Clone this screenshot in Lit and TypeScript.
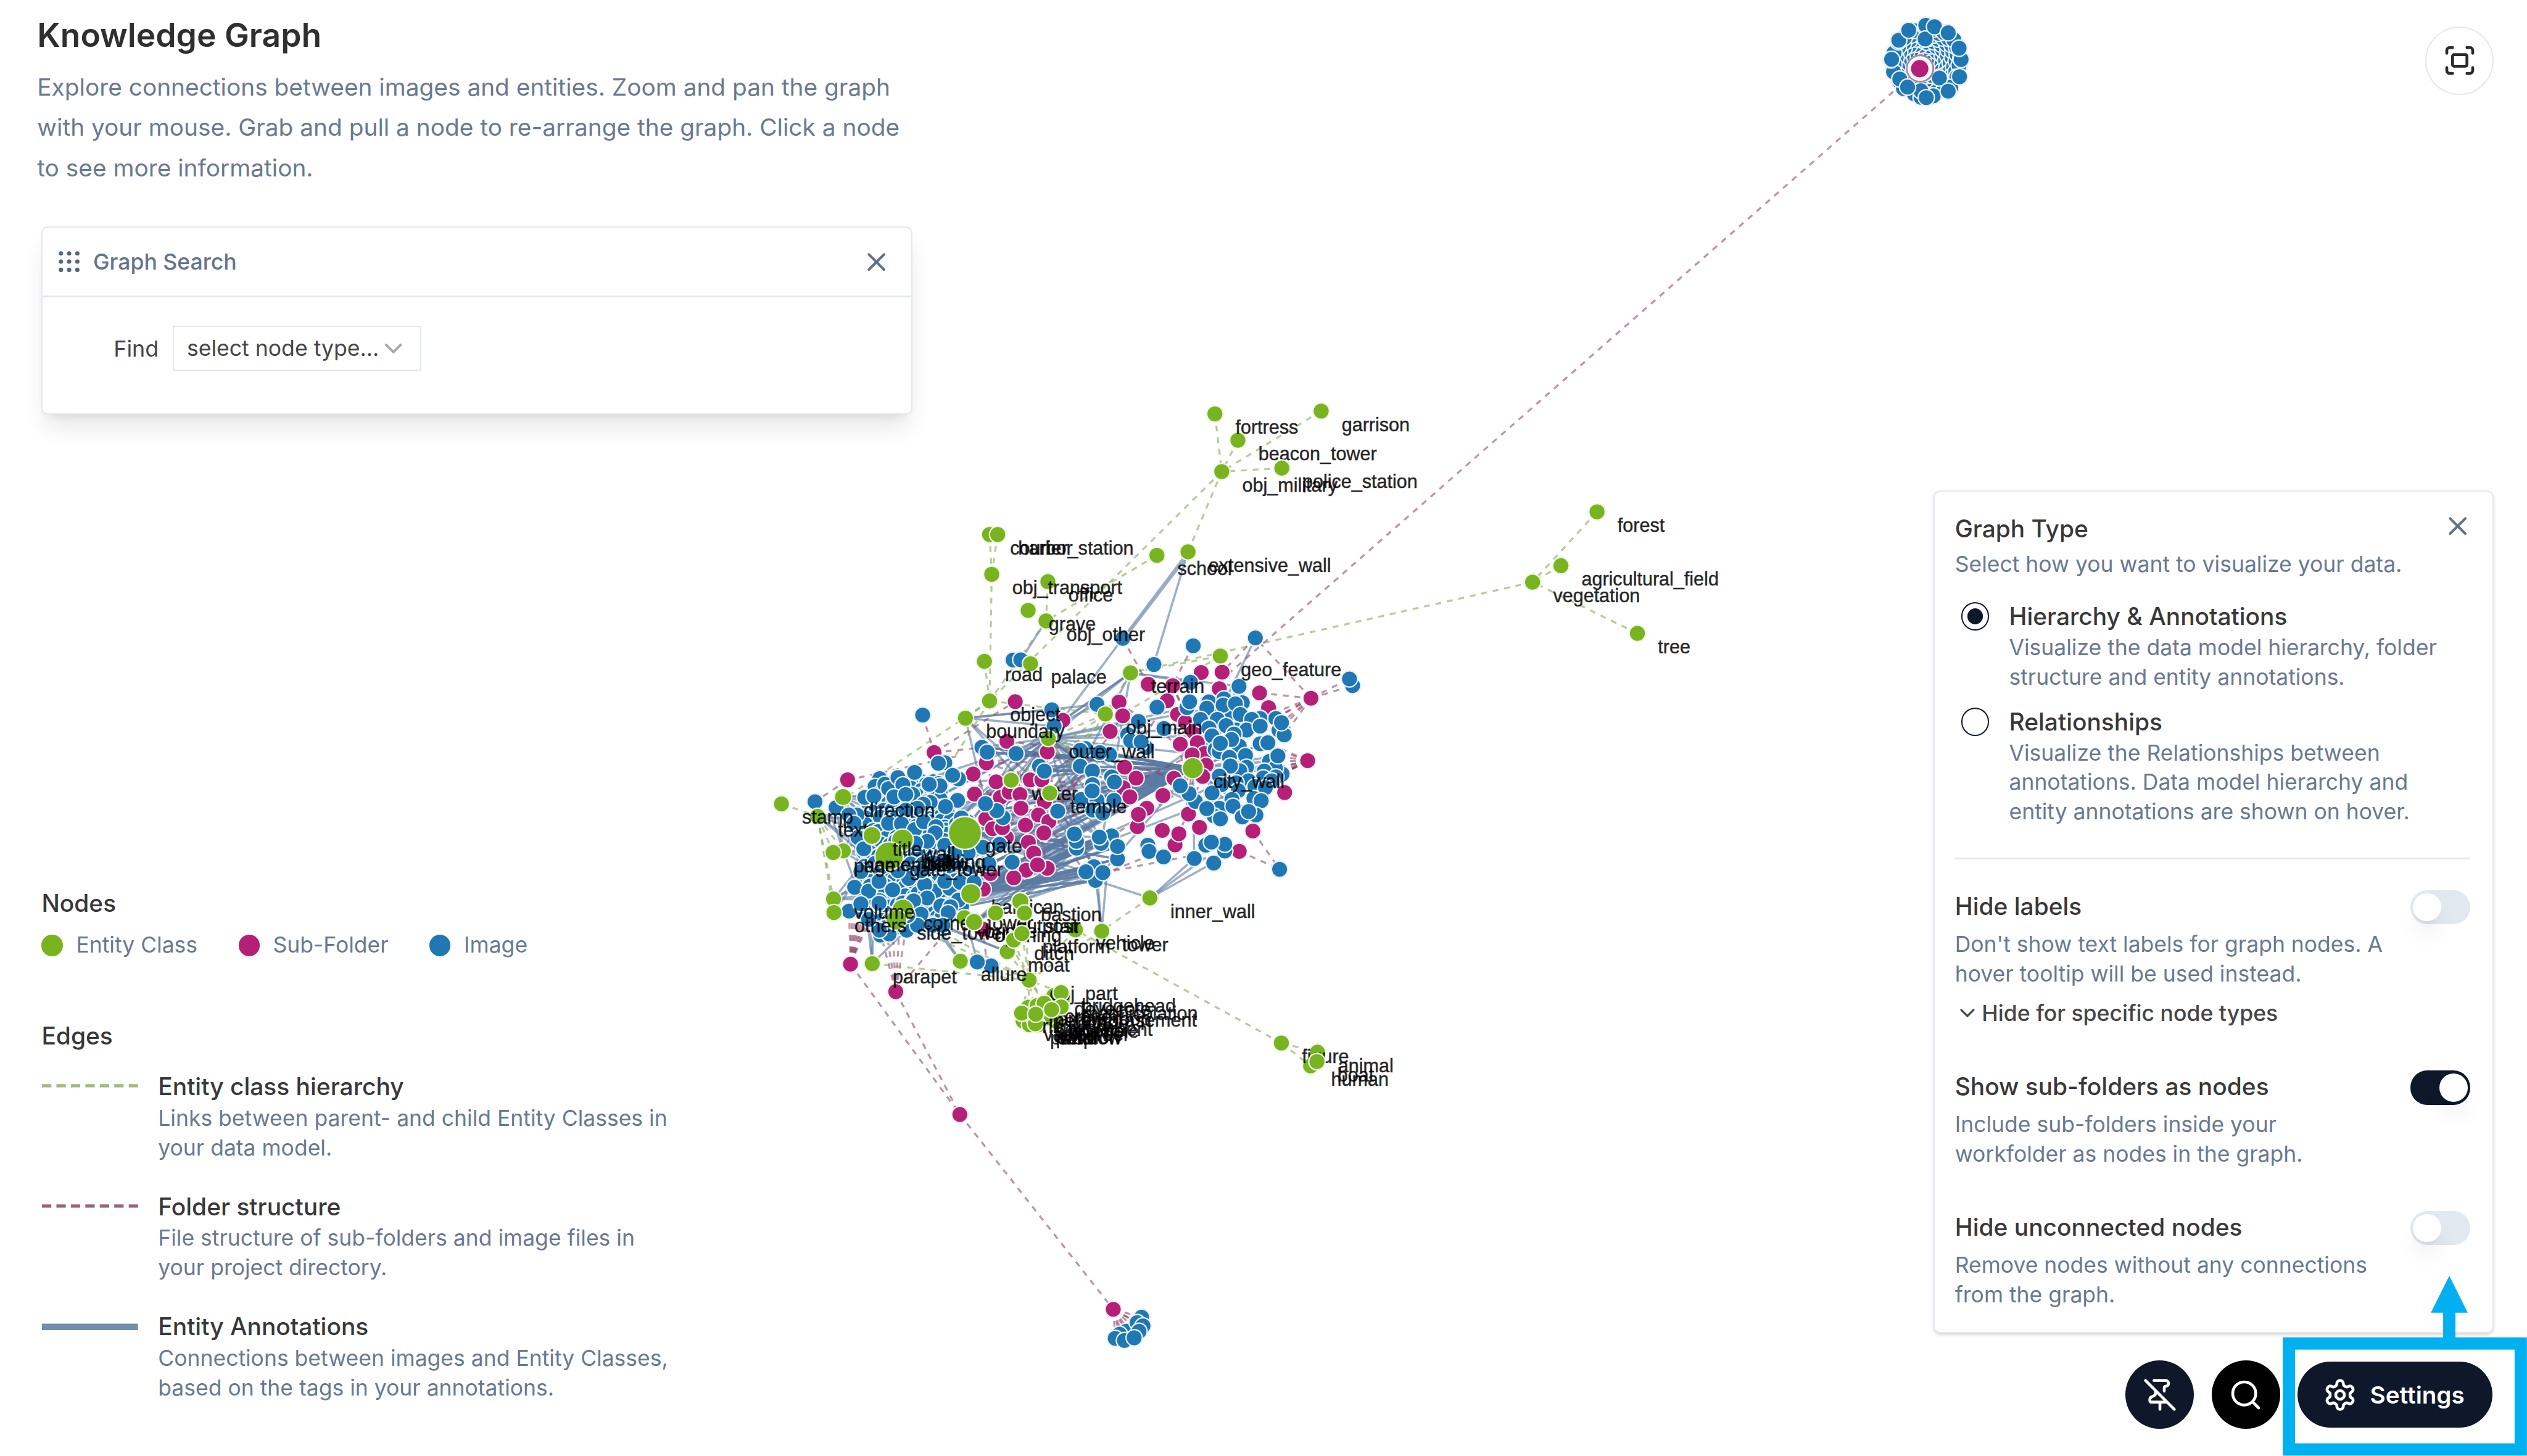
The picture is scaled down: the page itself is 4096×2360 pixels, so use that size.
import { LitElement, html, svg, css } from 'lit';
import { customElement } from 'lit/decorators.js';

type P = [number, number];
type Entity = { x: number; y: number; r: number; label: string };

/* Maps a flat list of local coordinates into graph space. */
const place = (ox: number, oy: number, sx: number, sy: number, flat: number[]): P[] => {
  const out: P[] = [];
  for (let i = 0; i < flat.length; i += 2) out.push([ox + flat[i] / sx, oy + flat[i + 1] / sy]);
  return out;
};

/* Small seeded generator, so that the layout is stable between renders. */
let seed = 7;
const rnd = () => {
  seed = (seed * 1664525 + 1013904223) % 4294967296;
  return seed / 4294967296;
};

/* ---------- images ---------- */
const imagesWestBack: P[] = [];
for (let y = 1335; y < 1595; y += 13) {
  for (let x = 1465; x < 1660; x += 13) {
    const px = x + (rnd() - 0.5) * 12;
    const py = y + (rnd() - 0.5) * 12;
    const left = py < 1400 ? 1465 + (1400 - py) * 0.35 : py > 1550 ? 1462 + (py - 1550) * 0.9 : 1470;
    const right = py < 1400 ? 1618 : py > 1550 ? 1640 - (py - 1550) * 0.8 : 1664;
    if (px > left && px < right) imagesWestBack.push([px, py]);
  }
}
const imagesWest = place(1380, 1240, 3, 3, [
  35, 387, 143, 417, 250, 455, 208, 455, 235, 498, 290, 365, 337, 358, 393, 297, 412, 320, 460, 263, 485, 300,
  545, 237, 440, 362, 535, 350, 500, 350, 675, 305, 620, 298, 700, 187, 667, 190, 770, 270, 740, 252, 765, 380,
  703, 412, 625, 390, 590, 400, 560, 420, 500, 430, 412, 497, 478, 500, 545, 530, 592, 490, 655, 515, 650, 547,
  785, 470, 610, 590, 550, 600, 700, 610, 255, 570, 285, 628, 270, 745, 238, 825, 310, 845, 363, 795, 515, 780,
  433, 838, 650, 845, 597, 812, 725, 830, 700, 795, 780, 800, 850, 800, 210, 947, 270, 910, 363, 907, 610, 880,
  540, 895, 578, 963, 770, 890, 680, 920, 730, 925, 717, 955, 370, 1070, 415, 1065, 365, 1045, 505, 1045,
  560, 1020, 640, 1020, 690, 1020, 310, 990, 510, 970, 895, 620, 925, 705, 980, 605, 820, 650, 760, 700,
  1045, 697, 890, 108, 917, 133, 1065, 140, 1185, 205, 1210, 230, 998, 468, 966, 433, 908, 397, 1275, 437,
  937, 1228, 866, 1208, 750, 650, 700, 690, 640, 700, 580, 740, 460, 740,
]);
const imagesEast = place(1800, 1050, 2.8, 3, [
  328, 120, 665, 158, 962, 118, 477, 254, 652, 345, 884, 366, 1427, 362, 1412, 328, 205, 458, 492, 473, 403, 545,
  525, 582, 352, 613, 366, 645, 440, 680, 416, 650, 150, 685, 125, 693, 265, 715, 218, 705, 125, 775, 183, 800,
  275, 830, 288, 856, 183, 870, 130, 945, 205, 950, 182, 902, 286, 950, 185, 1000, 232, 1015, 17, 1005, 107, 1195,
  107, 1160, 97, 1122, 275, 1132, 225, 1170, 216, 1138, 303, 1250, 303, 1186, 190, 1290, 198, 1360, 152, 1316,
  233, 1320, 448, 1180, 454, 1211, 523, 1240, 725, 1180, 816, 1210, 816, 1175, 752, 1164, 670, 1248, 763, 1271,
  1078, 1303,
  635, 475, 648, 445, 740, 445, 812, 430, 900, 450, 770, 500, 850, 500, 730, 478, 808, 462, 867, 455, 700, 535, 890, 510,
  780, 535, 985, 530, 945, 535, 870, 590, 920, 590, 740, 580, 822, 567, 985, 570, 1060, 530, 1075, 590, 1100, 615, 1087, 552,
  755, 620, 860, 610, 885, 672, 848, 638, 770, 690, 790, 700, 795, 658, 985, 660, 1022, 655, 915, 720, 840, 770, 838, 730,
  1030, 750, 1090, 815, 1058, 785, 1070, 722, 920, 780, 888, 798, 843, 774, 1005, 800, 1000, 835, 790, 825, 1060, 830,
  930, 850, 960, 880, 1040, 850, 870, 860, 800, 870, 880, 900, 1010, 885, 955, 940, 990, 952,
  850, 945, 790, 990, 765, 1030, 795, 1045, 855, 980, 675, 955, 755, 912, 730, 992, 645, 915, 603, 875, 900, 1035,
  965, 1025, 930, 1007,
]);
const imagesMisc: P[] = [[1575.5, 1221], [1800, 1240], [1796, 1212], [1730, 1127], [1743, 1126.7]];
const imagesNorthBack: P[] = Array.from({ length: 130 }, (_, i) => {
  const a = i * 2.39996;
  const r = 61 * Math.sqrt((i + 6) / 136);
  return [3289.3 + Math.cos(a) * r, 106 + Math.sin(a) * r] as P;
});
const imagesNorth = place(3190, 0, 3, 3, [
  365, 400, 295, 130, 292, 200, 340, 137, 157, 206, 208, 155, 410, 168, 476, 305, 466, 247, 468, 393, 410, 467,
  270, 465, 298, 500, 162, 405, 202, 446, 120, 304,
]);
const imagesSouth = place(1860, 2190, 3, 3, [
  190, 250, 155, 265, 268, 178, 245, 205, 275, 222, 255, 250, 133, 286, 180, 297, 230, 283,
]);

/* ---------- sub-folders ---------- */
const folders: P[] = [
  ...place(1800, 1050, 2.8, 3, [
    450, 355, 567, 362, 703, 295, 803, 293, 790, 378, 310, 447, 540, 440, 328, 517, 268, 597, 590, 510, 628, 550,
    665, 597, 685, 655, 603, 662, 720, 710, 660, 717, 727, 770, 710, 827, 573, 837, 337, 780, 392, 836, 330, 885,
    362, 932, 520, 925, 443, 990, 398, 1085, 403, 1022, 642, 1020, 695, 1088, 517, 1104, 578, 1178, 596, 1121,
    982, 400, 1228, 427, 1025, 475, 1212, 747, 1102, 910, 950, 1107, 885, 1211, 42, 540,
  ]),
  ...place(1380, 1240, 3, 3, [
    645, 135, 202, 275, 1018, 78, 1225, 132, 913, 188, 845, 245, 852, 348, 963, 285, 1137, 275, 1197, 275,
    970, 400, 985, 365, 1030, 338, 1085, 350, 1090, 420, 1210, 388, 1180, 455, 1233, 488, 1113, 507, 1207, 547,
    910, 475, 945, 525, 1015, 570, 995, 520, 1128, 595, 1155, 650, 1225, 728, 1117, 738, 1175, 710, 1053, 777,
    933, 755, 897, 835, 895, 1040, 217, 1219,
  ]),
  [1733.6, 1198], [1529.6, 1693.3], [1639, 1903], [1901, 2235.7],
];

/* ---------- entity classes ---------- */
const E = (label: string, x: number, y: number, r = 13.2): Entity => ({ label, x, y, r });
const entities: Entity[] = [
  E('fortress', 2074.5, 706.7), E('garrison', 2256, 702), E('beacon_tower', 2113.8, 751.7),
  E('obj_military', 2086.2, 805.3), E('police_station', 2188.8, 799.3),
  E('courier_station', 1689.8, 912.7), E('harbor', 1703.6, 912.7),
  E('office', 1789.3, 993.3), E('obj_transport', 1693.4, 980.7), E('school', 1975.5, 948.3),
  E('extensive_wall', 2028.6, 942.3), E('grave', 1755.6, 1042.3), E('obj_other', 1786.2, 1060.3),
  E('road', 1681, 1129.3), E('palace', 1759.7, 1133.3), E('geo_feature', 2083.7, 1120.3),
  E('terrain', 1930.4, 1149), E('obj_main', 1887.5, 1219.3), E('city_wall', 2036.8, 1311.7, 17.3),
  E('outer_wall', 1790, 1261), E('object', 1689.8, 1197), E('boundary', 1648.6, 1226.3),
  E('inner_wall', 1963.5, 1533.3),
  E('forest', 2727, 874), E('agricultural_field', 2665.5, 966), E('vegetation', 2617, 994), E('tree', 2796, 1081.5),
  E('text', 1396, 1394), E('stamp', 1334.4, 1372.7), E('direction', 1439.7, 1361, 14),
  E('water', 1726.7, 1332.3), E('temple', 1792.5, 1354.3),
  E('wall', 1541, 1434.3, 18), E('gate_tower', 1518.3, 1461.7, 23.5), E('title', 1489, 1426.7, 14.6),
  E('name', 1440, 1453), E('page', 1422.7, 1455.7), E('gate', 1647.7, 1422.3, 27.5),
  E('volume', 1423.3, 1535), E('others', 1424, 1558.3), E('corner_tower', 1541.7, 1554, 18),
  E('side_tower', 1530.7, 1570.7, 17), E('barbican', 1657.7, 1526, 16.6),
  E('bridge', 1646.7, 1567), E('opening', 1663.3, 1574.3, 14), E('outpost', 1700, 1559),
  E('bastion', 1742.3, 1539, 14), E('stair', 1749.3, 1559),
  E('moat', 1720, 1625), E('ditch', 1731, 1605), E('platform', 1745, 1594),
  E('vehicle', 1836.4, 1587.7), E('tower', 1881.3, 1590),
  E('parapet', 1489.4, 1645.3), E('allure', 1639.8, 1641.3), E('obj_part', 1757.3, 1673.7),
  E('bridgehead', 1811.9, 1695), E('machicolation', 1813.5, 1707), E('dovecote', 1799.7, 1700),
  E('embrasement', 1812, 1719.3), E('crenel', 1783, 1713), E('revetment', 1790, 1735), E('merlon', 1756, 1720),
  E('arrow_loop', 1771, 1717), E('corbel', 1803, 1743), E('rib', 1744.6, 1730), E('vault', 1747, 1743.3),
  E('portal', 1758, 1750), E('window', 1773, 1750), E('loophole', 1788, 1738), E('pinnacle', 1765, 1738),
  E('step', 1772, 1750), E('gallery', 1768.6, 1731.7), E('pavilion', 1768, 1748), E('facade', 1795.6, 1724),
  E('figure', 2188, 1781), E('animal', 2249.7, 1796.7), E('human', 2238, 1820), E('boat', 2248.7, 1812.7),
];
/* Drawn again above every label. */
const raised = ['water', 'temple', 'title', 'gate', 'barbican', 'outpost', 'bastion', 'stair', 'ditch', 'platform', 'boat', 'opening', 'police_station', 'inner_wall', 'crenel', 'bridgehead', 'rib', 'embrasement', 'gallery', 'facade'];
const looseLabels: [string, number, number][] = [
  ['emblem', 1538, 1487], ['building', 1572, 1483], ['hall', 1577, 1484], ['cell', 1583, 1487],
];
const at = (name: string): P => {
  const e = entities.find((n) => n.label === name)!;
  return [e.x, e.y];
};

/* ---------- edges ---------- */
type Edge = [P, P];
const classEdges: Edge[] = (
  [
    ['fortress', 'obj_military'], ['garrison', 'obj_military'], ['beacon_tower', 'obj_military'],
    ['police_station', 'obj_military'], ['obj_military', 'object'], ['extensive_wall', 'obj_military'],
    ['school', 'obj_other'], ['office', 'obj_other'], ['obj_other', 'object'],
    ['courier_station', 'obj_transport'], ['harbor', 'obj_transport'], ['obj_transport', 'object'], ['road', 'object'],
    ['forest', 'vegetation'], ['agricultural_field', 'vegetation'], ['tree', 'vegetation'],
    ['vegetation', 'terrain'], ['geo_feature', 'terrain'], ['terrain', 'obj_main'], ['geo_feature', 'water'],
    ['object', 'text'], ['object', 'boundary'], ['object', 'obj_main'], ['obj_main', 'outer_wall'], ['obj_main', 'water'],
    ['object', 'wall'], ['stamp', 'text'], ['text', 'page'], ['text', 'name'], ['text', 'volume'], ['text', 'others'],
    ['parapet', 'obj_part'], ['allure', 'obj_part'], ['moat', 'obj_part'], ['ditch', 'obj_part'],
    ['platform', 'obj_part'], ['stair', 'obj_part'], ['outpost', 'obj_part'], ['vehicle', 'obj_part'],
    ['inner_wall', 'obj_part'], ['figure', 'vehicle'], ['side_tower', 'obj_part'], ['corner_tower', 'obj_part'],
    ['figure', 'animal'], ['figure', 'human'], ['bridgehead', 'obj_part'], ['facade', 'obj_part'], ['crenel', 'obj_part'],
    ['merlon', 'obj_part'], ['gallery', 'obj_part'], ['rib', 'obj_part'], ['obj_main', 'temple'],
  ] as [string, string][]
).map(([a, b]) => [at(a), at(b)]);

const westCore = [...imagesWest, ...imagesWestBack].filter((p) => p[0] < 1660 && p[0] > 1440 && p[1] > 1310);
const middle = [...imagesWest, ...imagesEast].filter((p) => p[0] > 1670 && p[0] < 1925 && p[1] > 1270 && p[1] < 1520);
const lowMiddle = middle.filter((p) => p[1] > 1410 && p[0] > 1820);
const east = imagesEast.filter((p) => p[0] > 2020 && p[0] < 2200);
const pick = <T,>(a: T[]) => a[Math.floor(rnd() * a.length)];
const fan = (from: P, to: P[], n: number): Edge[] => Array.from({ length: n }, () => [from, pick(to)] as Edge);

const annotationEdges: Edge[] = [
  ...fan(at('city_wall'), middle.filter((p) => p[1] < 1400), 60),
  ...fan(at('city_wall'), middle, 10),
  ...fan(at('city_wall'), east, 24),
  ...fan(at('city_wall'), westCore, 16),
  ...fan(at('outer_wall'), middle, 14),
  ...fan(at('outer_wall'), westCore, 8),
  ...fan(at('outer_wall'), east, 6),
  ...fan(at('temple'), middle, 14),
  ...fan(at('water'), middle, 8),
  ...fan(at('water'), westCore, 4),
  ...fan(at('gate'), middle, 26),
  ...fan(at('gate'), westCore, 40),
  ...fan(at('gate_tower'), westCore, 30),
  ...fan(at('wall'), westCore, 20),
  ...fan(at('barbican'), lowMiddle, 54),
  ...fan(at('side_tower'), lowMiddle, 14),
  ...fan(at('barbican'), westCore, 16),
  ...fan(at('barbican'), east, 5),
  ...fan(at('corner_tower'), middle, 12),
  ...fan(at('opening'), lowMiddle, 6),
  ...fan(at('boundary'), middle, 3),
  ...fan(at('direction'), westCore, 8),
  ...fan(at('name'), westCore, 8),
  ...fan(at('others'), westCore, 4),
  ...fan(at('volume'), westCore, 5),
  ...fan(at('text'), westCore.filter((p) => p[0] < 1500), 5),
  ...fan(at('terrain'), middle, 3),
  ...fan(at('bastion'), lowMiddle, 3),
  [at('extensive_wall'), [1917, 1090]], [[2031, 945], [1919, 1092]], [at('extensive_wall'), [1970, 1134.7]],
  [[1917, 1090], at('outer_wall')], [at('terrain'), [1800, 1240]], [at('terrain'), at('outer_wall')],
  [[1873, 1203], [1800, 1240]], [[1873, 1203], at('boundary')], [at('boundary'), [1800, 1240]],
  [at('boundary'), [1796, 1212]], [at('terrain'), [2032.9, 1165]], [at('terrain'), [2115, 1172]],
  [at('tower'), [1870, 1490]], [at('tower'), [1874, 1502]], [at('tower'), [1890, 1490]],
  [at('inner_wall'), [1870.7, 1503.3]], [at('inner_wall'), [2039, 1466]], [at('inner_wall'), [2072, 1473]],
  [at('inner_wall'), [2059, 1464]], [at('obj_other'), [1743, 1126.7]], [at('palace'), [1743, 1126.7]],
  [at('parapet'), [1480, 1560]], [at('parapet'), [1486, 1560]], [at('parapet'), [1492, 1555]], [at('parapet'), [1548, 1588]],
  [at('allure'), [1600, 1580]], [at('allure'), [1593, 1580]], [[1668.7, 1642.7], [1650, 1570]],
  [[1415, 1380], at('name')], [[1428, 1379], at('name')], [at('moat'), [1610, 1580]], [at('moat'), [1590, 1575]],
];

const folderEdges: Edge[] = [
  [[3278, 117], [2086.8, 1160]],
  [[1452.3, 1646.3], [1639, 1903]], [[1529.6, 1693.3], [1639, 1903]], [[1639, 1903], [1901, 2235.7]],
  [[1575.5, 1221], [1595, 1285]], [[1595, 1285], [1733, 1198]], [[1447, 1332], [1391.7, 1369]],
  [[1447, 1332], [1640, 1290]], [[1595, 1285], [1690, 1275]], [[1684, 1303], [1790, 1300]],
  [[2150.7, 1183.3], [2238.6, 1192.3]], [[2238.6, 1192.3], [2309.6, 1170.7]], [[2238.6, 1192.3], [2304, 1159]],
  [[2116, 1453.7], [2185, 1484]], [[1917, 1090], [1960, 1168]], [[2037.5, 1102], [2002, 1170]], [[2143.6, 1089], [2086.8, 1147.7]],
  [[1966, 1460], [1890, 1490]], [[2030, 1462], [1885, 1490]],
];
for (let i = 0; i < 9; i++) folderEdges.push([[1452.3, 1646.3], [1450 + i * 5, 1560]]);
for (let i = 0; i < 5; i++) folderEdges.push([[1529.6, 1693.3], [1500 + i * 12, 1580]]);
folderEdges.push([[1529.6, 1693.3], [1625, 1580]], [[1686, 1650], [1678, 1587]]);
for (const p of east.filter((q) => q[0] > 2140)) {
  folderEdges.push([p[1] < 1260 ? [2238.6, 1192.3] : p[1] < 1345 ? [2232.9, 1299] : [2139.3, 1419], p]);
}
for (const p of imagesSouth) folderEdges.push([[1901, 2235.7], p]);
const inner = folders.filter((p) => p[0] > 1600 && p[0] < 2080 && p[1] < 1500 && p[1] > 1150);
for (let i = 0; i < 70; i++) {
  const a = pick(inner);
  const b = pick([...inner, ...middle]);
  if (Math.hypot(a[0] - b[0], a[1] - b[1]) < 230) folderEdges.push([a, b]);
}

const lines = (edges: Edge[], cls: string) =>
  edges.map(([a, b]) => svg`<line class=${cls} x1=${a[0].toFixed(1)} y1=${a[1].toFixed(1)} x2=${b[0].toFixed(1)} y2=${b[1].toFixed(1)}></line>`);
const dots = (points: P[], cls: string) =>
  points.map((p) => svg`<circle class=${'node ' + cls} cx=${p[0].toFixed(1)} cy=${p[1].toFixed(1)} r="13.9"></circle>`);
const entityDot = (e: Entity) => svg`<circle class="node entity" cx=${e.x} cy=${e.y} r=${e.r + 0.8}></circle>`;

const icon = (body: unknown, cls = 'icon') =>
  html`<svg class=${cls} viewBox="0 0 24 24" fill="none" stroke="currentColor" stroke-width="2" stroke-linecap="round" stroke-linejoin="round">${body}</svg>`;
const xIcon = svg`<path d="M18 6 6 18M6 6l12 12"></path>`;
const chevron = svg`<path d="m6 9 6 6 6-6"></path>`;

@customElement('kg-canvas')
export class KgCanvas extends LitElement {
  static styles = css`
    :host { display: block; position: absolute; inset: 0; }
    svg { display: block; width: 100%; height: 100%; }
    .node { stroke: #e9f1f7; stroke-width: 2.4; }
    .image { fill: #1f77b4; }
    .folder { fill: #b51f78; }
    .entity { fill: #78b41f; stroke: #eef6e2; }
    line { fill: none; }
    .ann { stroke: #5b7ca3; stroke-width: 3.8; opacity: 0.6; }
    .cls { stroke: #7ba347; stroke-width: 3.4; stroke-dasharray: 10 10; opacity: 0.55; }
    .fld { stroke: #8b3f63; stroke-width: 3.4; stroke-dasharray: 10 10; opacity: 0.56; }
    text { font: 32.2px 'Liberation Sans', Arial, sans-serif; fill: #000; opacity: 0.85; stroke: #000; stroke-width: 0.5; }
    .ring { fill: none; stroke: #a8748e; stroke-width: 3; opacity: 0.9; }
    .halo { fill: #fff; }
  `;
  render() {
    return html`<svg viewBox="0 0 4315 2486">
      ${lines(annotationEdges, 'ann')}${lines(folderEdges, 'fld')}${lines(classEdges, 'cls')}
      ${dots(folders, 'folder')}
      ${dots(imagesWestBack, 'image')}${dots(imagesWest, 'image')}${dots(imagesEast, 'image')}${dots(imagesMisc, 'image')}
      ${dots(imagesNorthBack, 'image')}${dots(imagesNorth, 'image')}${dots(imagesSouth, 'image')}
      <circle class="halo" cx="3278" cy="117.3" r="24"></circle>
      <circle class="ring" cx="3278.6" cy="117" r="22.5"></circle>
      <circle class="halo" cx="3278" cy="117.3" r="20.5"></circle>
      <circle class="node folder" cx="3278" cy="117.3" r="16"></circle>
      ${entities.map(entityDot)}
      ${entities.map((e) => svg`<text x=${e.x + 35} y=${e.y + 34}>${e.label}</text>`)}
      ${looseLabels.map(([t, x, y]) => svg`<text x=${x} y=${y}>${t}</text>`)}
      ${entities.filter((e) => raised.includes(e.label)).map(entityDot)}
    </svg>`;
  }
}

@customElement('kg-toggle')
export class KgToggle extends LitElement {
  static properties = { on: { type: Boolean, reflect: true } };
  declare on: boolean;
  static styles = css`
    :host { display: flex; box-sizing: border-box; flex: none; width: 103px; height: 58px; padding: 5px; border-radius: 29px; background: #e2e8f0; }
    :host([on]) { background: #0f172a; justify-content: flex-end; }
    .knob { width: 48px; height: 48px; border-radius: 50%; background: #fff; box-shadow: 0 26px 39px -8px rgb(0 0 0 / 0.1), 0 10px 16px -10px rgb(0 0 0 / 0.1); }
  `;
  render() {
    return html`<div class="knob"></div>`;
  }
}

@customElement('app-root')
export class AppRoot extends LitElement {
  static styles = css`
    :host { display: block; width: 100vw; height: 100vh; overflow: hidden; background: #fff; font-family: Inter, sans-serif; }
    .stage { position: relative; box-sizing: border-box; display: flex; justify-content: space-between; width: 4315px; height: 2486px; zoom: 0.949247; color: #383838; }
    .left, .right { position: relative; display: flex; flex-direction: column; box-sizing: border-box; height: 100%; }
    .left { width: 1560px; padding: 26px 0 91px 63.5px; justify-content: space-between; }
    .right { width: 1013px; padding: 45px 56.5px 46px 0; align-items: flex-end; }
    h1, h2, p { margin: 0; white-space: nowrap; }
    h1 { font-size: 56.2px; line-height: 68px; font-weight: 600; color: #2f2f2f; }
    h2 { font-size: 41px; line-height: 50px; font-weight: 500; }
    .intro { margin-top: 20px; font-size: 40.9px; line-height: 68.7px; color: #697990; }
    .small { font-size: 37.4px; line-height: 50.5px; color: #697990; }
    .search { box-sizing: border-box; width: 1488px; height: 321px; margin: 67px 0 0 7px; border: 3px solid #e2e8f0; border-radius: 11px; background: #fff; box-shadow: 0 27px 40px -8px rgb(0 0 0 / 0.1), 0 11px 16px -11px rgb(0 0 0 / 0.1); }
    .search-head { display: flex; align-items: center; height: 115px; padding: 2px 34px 0 28px; border-bottom: 4px solid #e2e8f0; color: #64748b; box-sizing: content-box; height: 113px; }
    .grip { width: 36px; height: 36px; margin-bottom: 2px; }
    .search-title { flex: 1; margin-left: 22.5px; font-size: 37.5px; font-weight: 500; }
    .close { width: 52px; height: 52px; color: #5f7089; }
    .search-body { display: flex; align-items: center; padding: 49px 0 0 121.5px; font-size: 37.8px; color: #454545; }
    .select { display: flex; align-items: center; box-sizing: border-box; width: 425px; height: 77px; margin-left: 23.5px; padding-left: 22.5px; border: 3px solid #e2e8f0; font-size: 37.5px; }
    .select-arrow { width: 50px; height: 50px; margin-left: 0; color: #a8a8a8; }
    .nodes { display: flex; align-items: center; gap: 70px; margin: 22px 0 103.5px 7.5px; }
    .key { display: flex; align-items: center; gap: 23px; }
    .dot { width: 36px; height: 36px; border-radius: 50%; }
    .dot.entity { background: #78b41f; }
    .dot.folder { background: #b51f78; }
    .dot.image { background: #1f77b4; }
    .heading { margin-left: 7.5px; }
    .edges { display: flex; flex-direction: column; gap: 49.5px; margin-top: 37px; }
    .edge { display: flex; gap: 34px; margin-left: 8.5px; }
    .edge .small { margin-top: 4.3px; }
    .line { flex: none; width: 164px; height: 50px; }
    .fit { display: flex; align-items: center; justify-content: center; flex: none; box-sizing: border-box; width: 117px; height: 117px; border: 3px solid #e2e8f0; border-radius: 50%; color: #2b2b2b; background: #fff; }
    .icon { width: 59px; height: 59px; }
    .panel { box-sizing: border-box; width: 956.5px; height: 1439px; margin-top: auto; padding: 38.5px 38px 0 34px; border: 3px solid #e2e8f0; border-radius: 12px; background: #fff; box-shadow: 0 3px 8px rgb(0 0 0 / 0.1), 0 3px 5px -3px rgb(0 0 0 / 0.1); }
    .row { display: flex; justify-content: space-between; align-items: flex-start; }
    .row kg-toggle { margin-top: -2px; }
    .row .close { margin: -5px -4px -6px 0; }
    .radio { display: flex; gap: 34px; margin-left: 10.5px; }
    .circle { display: flex; flex: none; align-items: center; justify-content: center; box-sizing: border-box; width: 48px; height: 48px; margin-top: 1.5px; border: 2.7px solid #0f172a; border-radius: 50%; }
    .circle i { width: 27px; height: 27px; border-radius: 50%; background: #0f172a; }
    .rule { height: 3.5px; margin: 52px 0 54.5px; background: #e2e8f0; }
    .more { display: flex; align-items: center; height: 50.5px; margin: 16.5px 0 75px; font-size: 37.5px; font-weight: 500; color: #454545; }
    .more svg { width: 42px; height: 42px; margin: 0 4px 0 0; }
    .actions { display: flex; align-items: center; gap: 30px; margin-top: 47px; padding-right: 2px; color: #fff; }
    .round { display: flex; align-items: center; justify-content: center; width: 117px; height: 117px; border-radius: 50%; background: #0f172a; }
    .round.black { background: #000; }
    .settings { display: flex; align-items: center; box-sizing: border-box; width: 333px; height: 113px; padding-left: 43px; gap: 21.5px; border-radius: 57px; background: #0f172a; font-size: 40.7px; font-weight: 600; }
    .callout { position: absolute; left: 3898px; top: 2179px; width: 417px; height: 307px; }
    .g1 { margin-top: 10.5px; } .g2 { margin-top: 38.5px; } .g3 { margin-top: 3.7px; } .g4 { margin-top: 25px; } .g5 { margin-top: 15.3px; } .g6 { margin-top: 73.5px; }
  `;

  private edge(title: string, l1: string, l2: string, line: unknown) {
    return html`<div class="edge">
      <svg class="line" viewBox="0 0 164 50">${line}</svg>
      <div><h2>${title}</h2><p class="small">${l1}<br />${l2}</p></div>
    </div>`;
  }

  render() {
    return html`<div class="stage">
      <kg-canvas></kg-canvas>
      <section class="left">
        <div>
          <h1>Knowledge Graph</h1>
          <p class="intro">Explore connections between images and entities. Zoom and pan the graph<br />with your mouse. Grab and pull a node to re-arrange the graph. Click a node<br />to see more information.</p>
          <div class="search">
            <div class="search-head">
              <svg class="grip" viewBox="0 0 36 36" fill="#53657f">${[4, 18, 32].map((y) => [4, 18, 32].map((x) => svg`<circle cx=${x} cy=${y} r="3.7"></circle>`))}</svg>
              <span class="search-title">Graph Search</span>
              ${icon(xIcon, 'close')}
            </div>
            <div class="search-body">Find<div class="select">select node type...${icon(chevron, 'select-arrow')}</div></div>
          </div>
        </div>
        <div>
          <h2 class="heading">Nodes</h2>
          <div class="nodes small">
            <div class="key"><i class="dot entity"></i>Entity Class</div>
            <div class="key"><i class="dot folder"></i>Sub-Folder</div>
            <div class="key"><i class="dot image"></i>Image</div>
          </div>
          <h2 class="heading">Edges</h2>
          <div class="edges">
            ${this.edge('Entity class hierarchy', 'Links between parent- and child Entity Classes in', 'your data model.', svg`<path d="M0 24H164" stroke="#a3bb7c" stroke-width="5.5" stroke-dasharray="16 8.7"></path>`)}
            ${this.edge('Folder structure', 'File structure of sub-folders and image files in', 'your project directory.', svg`<path d="M0 24H164" stroke="#9b637b" stroke-width="5.5" stroke-dasharray="16 8.7"></path>`)}
            ${this.edge('Entity Annotations', 'Connections between images and Entity Classes,', 'based on the tags in your annotations.', svg`<path d="M0 26H164" stroke="#738ead" stroke-width="11"></path>`)}
          </div>
        </div>
      </section>
      <section class="right">
        <div class="fit">${icon(svg`<path d="M3 7V5a2 2 0 0 1 2-2h2M17 3h2a2 2 0 0 1 2 2v2M21 17v2a2 2 0 0 1-2 2h-2M7 21H5a2 2 0 0 1-2-2v-2"></path><rect width="10" height="8" x="7" y="8" rx="1"></rect>`)}</div>
        <div class="panel">
          <div class="row"><h2>Graph Type</h2>${icon(xIcon, 'close')}</div>
          <p class="small g1">Select how you want to visualize your data.</p>
          <div class="radio g2">
            <div class="circle"><i></i></div>
            <div><h2>Hierarchy &amp; Annotations</h2><p class="small g3">Visualize the data model hierarchy, folder<br />structure and entity annotations.</p></div>
          </div>
          <div class="radio g4">
            <div class="circle"></div>
            <div><h2>Relationships</h2><p class="small g3">Visualize the Relationships between<br />annotations. Data model hierarchy and<br />entity annotations are shown on hover.</p></div>
          </div>
          <div class="rule"></div>
          <div class="row"><div><h2>Hide labels</h2><p class="small g5">Don't show text labels for graph nodes. A<br />hover tooltip will be used instead.</p></div><kg-toggle></kg-toggle></div>
          <div class="more">${icon(chevron)}Hide for specific node types</div>
          <div class="row"><div><h2>Show sub-folders as nodes</h2><p class="small g5">Include sub-folders inside your<br />workfolder as nodes in the graph.</p></div><kg-toggle on></kg-toggle></div>
          <div class="row g6"><div><h2>Hide unconnected nodes</h2><p class="small g5">Remove nodes without any connections<br />from the graph.</p></div><kg-toggle></kg-toggle></div>
        </div>
        <div class="actions">
          <div class="round">${icon(svg`<path d="M12 17v5M15 9.34V7a1 1 0 0 1 1-1 2 2 0 0 0 0-4H7.89M2 2l20 20M9 9v1.76a2 2 0 0 1-1.11 1.79l-1.78.9A2 2 0 0 0 5 15.24V16a1 1 0 0 0 1 1h11"></path>`)}</div>
          <div class="round black">${icon(svg`<circle cx="11" cy="11" r="8"></circle><path d="m21 21-4.3-4.3"></path>`)}</div>
          <div class="settings">${icon(svg`<path d="M12.22 2h-.44a2 2 0 0 0-2 2v.18a2 2 0 0 1-1 1.73l-.43.25a2 2 0 0 1-2 0l-.15-.08a2 2 0 0 0-2.73.73l-.22.38a2 2 0 0 0 .73 2.73l.15.1a2 2 0 0 1 1 1.72v.51a2 2 0 0 1-1 1.74l-.15.09a2 2 0 0 0-.73 2.73l.22.38a2 2 0 0 0 2.73.73l.15-.08a2 2 0 0 1 2 0l.43.25a2 2 0 0 1 1 1.73V20a2 2 0 0 0 2 2h.44a2 2 0 0 0 2-2v-.18a2 2 0 0 1 1-1.73l.43-.25a2 2 0 0 1 2 0l.15.08a2 2 0 0 0 2.73-.73l.22-.39a2 2 0 0 0-.73-2.73l-.15-.08a2 2 0 0 1-1-1.74v-.5a2 2 0 0 1 1-1.74l.15-.09a2 2 0 0 0 .73-2.73l-.22-.38a2 2 0 0 0-2.73-.73l-.15.08a2 2 0 0 1-2 0l-.43-.25a2 2 0 0 1-1-1.73V4a2 2 0 0 0-2-2z"></path><circle cx="12" cy="12" r="3"></circle>`)}<span>Settings</span></div>
        </div>
      </section>
      <svg class="callout" viewBox="0 0 417 307">
        <rect x="10.5" y="115.5" width="396" height="181" fill="none" stroke="#00b0f0" stroke-width="21"></rect>
        <path d="M284.5 0 316 63H295V110H274V63H253Z" fill="#00b0f0"></path>
      </svg>
    </div>`;
  }
}
